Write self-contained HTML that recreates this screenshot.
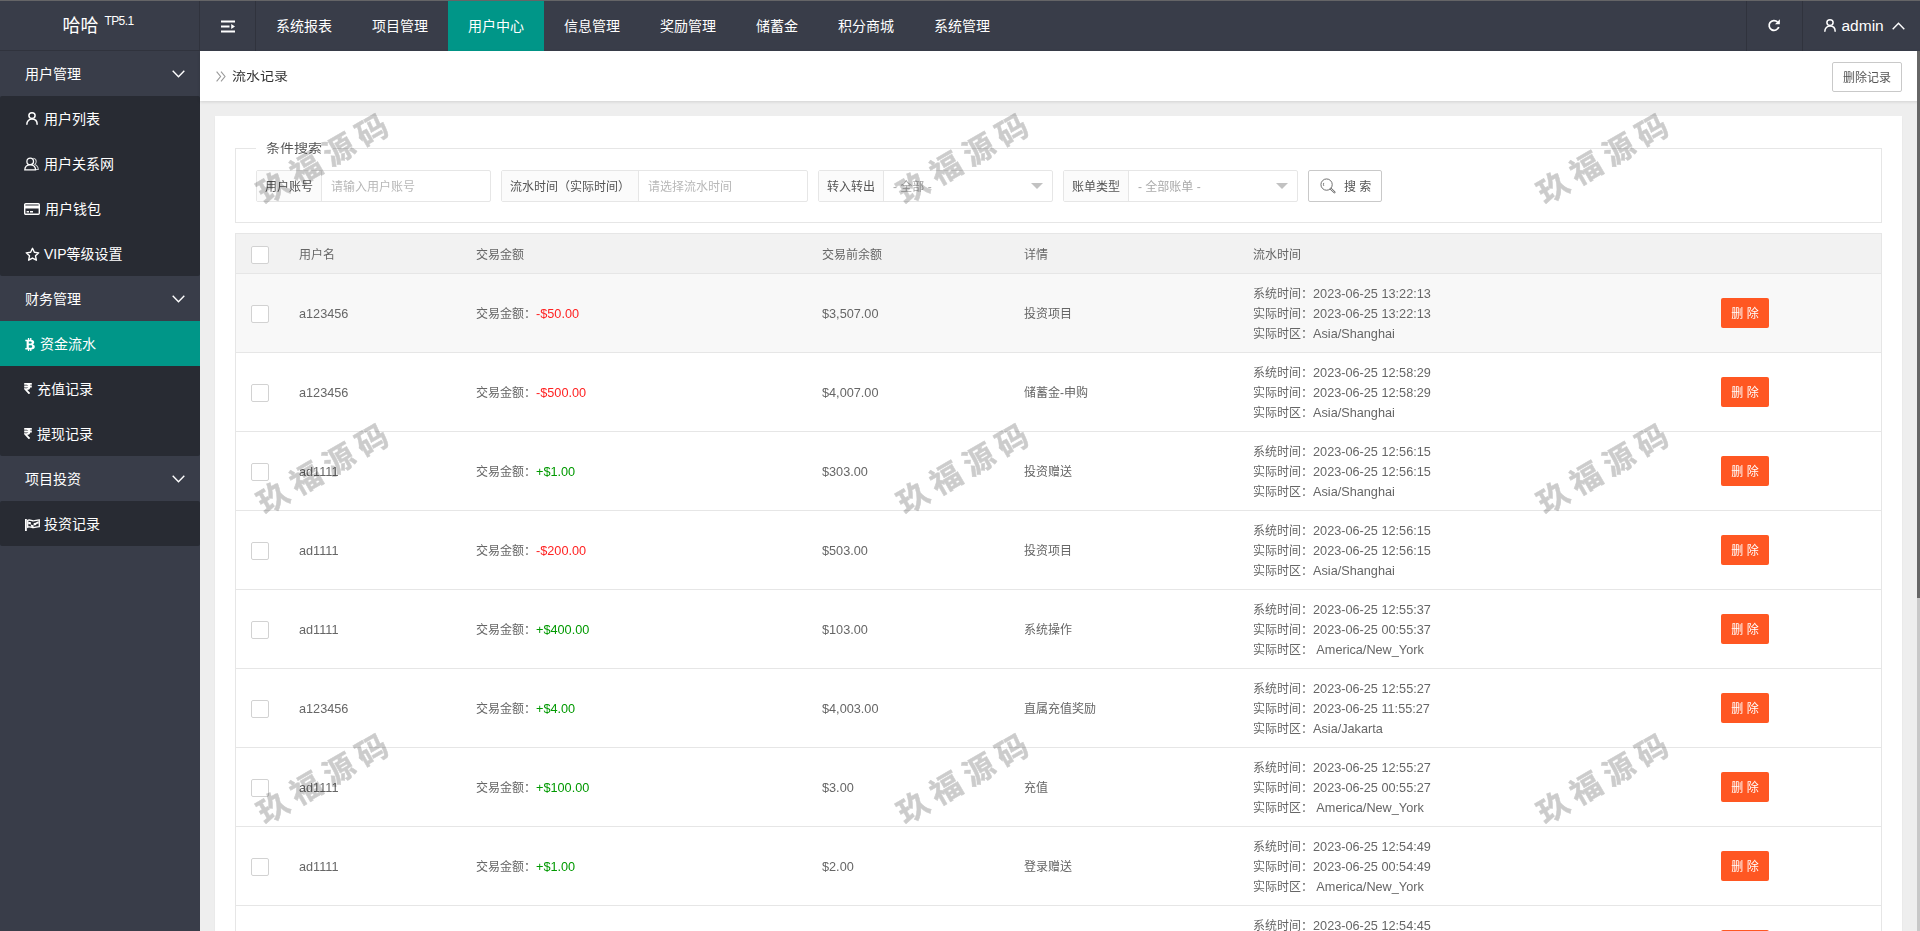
<!DOCTYPE html>
<html lang="zh-CN">
<head>
<meta charset="utf-8">
<title>流水记录</title>
<style>
*{margin:0;padding:0;box-sizing:border-box}
html,body{width:1920px;height:931px;overflow:hidden;background:#eee}
body{position:relative;font-family:"Liberation Sans","Noto Sans CJK SC",sans-serif;font-size:14px;color:#666;-webkit-font-smoothing:antialiased}
b{font-weight:normal}
a{text-decoration:none;color:inherit}
svg{display:block}
.abs{position:absolute}

/* header */
.header{position:absolute;left:0;top:0;width:1920px;height:51px;background:#393D49;border-top:1px solid #656567}
.logo{position:absolute;left:0;top:0;width:200px;height:50px;line-height:50px;text-align:center;color:#fff;font-size:18px;border-right:1px solid #30333d;border-bottom:1px solid #30333d;padding-right:3px}
.logo sup{font-size:12px;position:relative;top:0;vertical-align:super;line-height:0;margin-left:1px;letter-spacing:-0.6px}
.shrink{position:absolute;left:200px;top:0;width:56px;height:50px;border-right:1px solid #30333d}
.shrink svg{position:absolute;left:21px;top:19px}
.nav{position:absolute;left:256px;top:0;height:50px;display:flex}
.nav a{display:block;height:50px;line-height:50px;padding:0 20px;color:#fff;font-size:14px;white-space:nowrap}
.nav a.on{background:#009688}
.hr1{position:absolute;left:1746px;top:0;width:57px;height:50px;border-left:1px solid #30333d;border-right:1px solid #30333d}
.hr1 svg{position:absolute;left:20px;top:18px}
.hr2{position:absolute;left:1802px;top:0;width:118px;height:50px;color:#fff}
.hr2 .u{position:absolute;left:22px;top:18px}
.hr2 .t{position:absolute;left:39.5px;top:0;line-height:50px;font-size:15.5px}
.hr2 .ar{position:absolute;left:90px;top:21px}

/* side */
.side{position:absolute;left:0;top:51px;width:200px;height:880px;background:#393D49}
.side .g{position:relative;height:45px;line-height:47px;color:#fff;font-size:14px;padding-left:25px}
.side .g svg{position:absolute;left:172px;top:19px}
.side .sub{background:#282B33;border-radius:2px}
.side .it{position:relative;height:45px;line-height:47px;color:#fff;font-size:14px}
.side .it.on{background:#009688}
.side .it svg{position:absolute}
.side .it span{position:absolute;top:0}

/* crumb */
.crumb{will-change:transform;position:absolute;left:200px;top:51px;width:1720px;height:50px;background:#fff;box-shadow:0 1px 3px rgba(0,0,0,.12)}
.crumb .gg{position:absolute;left:16px;top:20px}
.crumb .tt{position:absolute;left:32px;top:0;line-height:51px;font-size:14px;color:#333;white-space:nowrap;transform:scaleY(.89)}
.crumb .btn{position:absolute;left:1632px;top:11px;width:70px;height:30px;border:1px solid #C9C9C9;border-radius:2px;background:#fff;color:#555;font-size:12px;line-height:30px;text-align:center}

/* card */
.card{will-change:transform;position:absolute;left:215px;top:116px;width:1687px;height:900px;background:#fff;box-shadow:0 1px 2px 0 rgba(0,0,0,.05)}
.fs{position:absolute;left:20px;top:32px;width:1647px;height:75px;border:1px solid #e6e6e6}
.fs .lg{position:absolute;left:20px;top:-12px;height:24px;line-height:25px;padding:0 11px 0 10px;background:#fff;font-size:14px;color:#555;transform:scaleY(.89)}
.grp{position:absolute;top:54px;height:32px;border:1px solid #e6e6e6;border-radius:2px;background:#fff}
.grp .lb{position:absolute;left:0;top:0;height:30px;line-height:33px;background:#fbfbfb;border-right:1px solid #e6e6e6;padding:0 8px;font-size:12px;color:#555;white-space:nowrap;text-align:center}
.grp .ph{position:absolute;top:0;line-height:33px;font-size:12px;color:#b8b8b8;white-space:nowrap}
.grp .tri{position:absolute;right:9px;top:12px;width:0;height:0;border:6px solid transparent;border-top-color:#c2c2c2}
.sbtn{position:absolute;left:1093px;top:54px;width:74px;height:32px;border:1px solid #c9c9c9;border-radius:2px;background:#fff;color:#555;font-size:12px}
.sbtn svg{position:absolute;left:11px;top:7px}
.sbtn span{position:absolute;left:35px;top:0;line-height:33px}

/* table */
.table{position:absolute;left:20px;top:117px;width:1647px;height:800px;border:1px solid #e6e6e6;border-bottom:0;font-size:12px;color:#666}
.th{position:absolute;left:0;top:0;width:1645px;height:39px;background:#f2f2f2;line-height:42px}
.tr{position:absolute;left:0;width:1645px;height:79px;border-top:1px solid #e6e6e6;line-height:20px}
.tr.hov{background:#f8f8f8}
.cb{position:absolute;left:15px;width:18px;height:18px;border:1px solid #d2d2d2;border-radius:2px;background:#fff}
.th .cb{top:12px}
.tr .cb{top:31px}
.c{position:absolute;white-space:nowrap}
.th .c{top:0}
.tr .c{top:30px}
.tr .c5{top:10px}
.c1{left:63px}.c2{left:240px}.c3{left:586px}.c4{left:788px}.c5{left:1017px}
.l{font-size:12.7px}
.neg{color:#f22}
.pos{color:#090}
.del{position:absolute;left:1485px;top:24px;width:48px;height:30px;background:#FF5722;border-radius:2px;color:#fff;font-size:12px;line-height:33px;text-align:center}

/* watermark */
.wm{position:absolute;left:0;top:0;width:1920px;height:931px;pointer-events:none;overflow:hidden}
.wm span{position:absolute;width:300px;height:60px;margin:-30px 0 0 -150px;line-height:60px;text-align:center;font-family:"Liberation Sans","Noto Sans CJK SC",sans-serif;font-weight:700;font-size:31px;letter-spacing:7px;text-indent:7px;color:#000;-webkit-text-stroke:0.5px #000;opacity:.2;transform:rotate(-30deg);white-space:nowrap}

/* scrollbar */
.sbar{position:absolute;left:1917px;top:51px;width:3px;height:880px;background:#c8c8c8}
.sbar i{position:absolute;left:0;top:0;width:3px;height:547px;background:#666}

</style>
</head>
<body>
<div class="header">
<div class="logo">哈哈 <sup>TP5.1</sup></div>
<div class="shrink"><svg width="14" height="13" viewBox="0 0 14 13"><path d="M0 0.5h14v2H0zM0 5.5h8.5v2H0zM0 10.5h14v2H0zM10.2 4l3.8 2.5-3.8 2.5z" fill="#fff"/></svg></div>
<div class="nav"><a>系统报表</a><a>项目管理</a><a class="on">用户中心</a><a>信息管理</a><a>奖励管理</a><a>储蓄金</a><a>积分商城</a><a>系统管理</a></div>
<div class="hr1"><svg width="14" height="13" viewBox="0 0 15 14"><path d="M11.3 3.2A5.3 5.3 0 1 0 12.6 8.6" fill="none" stroke="#fff" stroke-width="1.9"/><path d="M8.6 5.6h5.2V0.4z" fill="#fff"/></svg></div>
<div class="hr2"><svg class="u" width="12" height="13" viewBox="0 0 12 14" preserveAspectRatio="none"><circle cx="6" cy="3.9" r="3.1" fill="none" stroke="#fff" stroke-width="1.5"/><path d="M0.8 13.6C0.8 9.6 3.2 7.6 6 7.6s5.2 2 5.2 6" fill="none" stroke="#fff" stroke-width="1.5"/></svg><span class="t">admin</span><svg class="ar" width="13" height="8" viewBox="0 0 13 8"><path d="M0.7 7.2L6.5 1.2l5.8 6" fill="none" stroke="#fff" stroke-width="1.4"/></svg></div>
</div>

<div class="side">
<div class="g">用户管理<svg width="13" height="8" viewBox="0 0 13 8"><path d="M0.7 0.8L6.5 6.8l5.8-6" fill="none" stroke="#fff" stroke-width="1.4"/></svg></div>
<div class="sub">
<div class="it"><svg style="left:26px;top:16px" width="12" height="13" viewBox="0 0 12 14" preserveAspectRatio="none"><circle cx="6" cy="3.9" r="3.1" fill="none" stroke="#fff" stroke-width="1.5"/><path d="M0.8 13.6C0.8 9.6 3.2 7.6 6 7.6s5.2 2 5.2 6" fill="none" stroke="#fff" stroke-width="1.5"/></svg><span style="left:44px">用户列表</span></div>
<div class="it"><svg style="left:24px;top:16px" width="15" height="14" viewBox="0 0 15 14"><path d="M9.3 1.3c1.8 0.2 2.9 1.6 2.9 3.3 0 1.2-0.5 2.2-1.3 2.8 1.9 0.8 3.3 2.4 3.4 5.1H1" fill="none" stroke="#fff" stroke-width="1.1" opacity=".75"/><circle cx="6.2" cy="4.4" r="3.3" fill="#282B33" stroke="#fff" stroke-width="1.3"/><path d="M0.8 12.9C0.9 9.5 3.2 7.9 6.2 7.9s5.3 1.6 5.4 5z" fill="#282B33" stroke="#fff" stroke-width="1.3"/></svg><span style="left:44px">用户关系网</span></div>
<div class="it"><svg style="left:24px;top:17px" width="16" height="12" viewBox="0 0 16 12"><rect x="0.7" y="0.7" width="14.6" height="10.6" rx="1" fill="none" stroke="#fff" stroke-width="1.4"/><path d="M0.7 2.4h14.6v3H0.7zM2.6 8h2.4v1.4H2.6zM6 8h3v1.4H6z" fill="#fff"/></svg><span style="left:45px">用户钱包</span></div>
<div class="it"><svg style="left:24.6px;top:15.6px" width="15" height="15" viewBox="0 0 14 14"><path d="M7 1.2l1.75 3.75 4.05 0.5-3 2.8 0.8 4.05L7 10.3l-3.6 2 0.8-4.05-3-2.8 4.05-0.5z" fill="none" stroke="#fff" stroke-width="1.3" stroke-linejoin="round"/></svg><span style="left:44px">VIP等级设置</span></div>
</div>
<div class="g">财务管理<svg width="13" height="8" viewBox="0 0 13 8"><path d="M0.7 0.8L6.5 6.8l5.8-6" fill="none" stroke="#fff" stroke-width="1.4"/></svg></div>
<div class="sub">
<div class="it on"><svg style="left:25px;top:17px" width="10" height="13" viewBox="0 0 10 13"><path fill-rule="evenodd" d="M0.3 1.7h5.4c2.3 0 3.5 1 3.5 2.6 0 1-0.5 1.7-1.4 2.1 1.3 0.3 2 1.2 2 2.4 0 1.7-1.3 2.7-3.7 2.7H0.3V9.9h1.3V3.2H0.3zM3.8 3.4v2.2h1.5c0.9 0 1.4-0.4 1.4-1.1s-0.5-1.1-1.4-1.1zM3.8 7.2v2.5h1.8c1 0 1.6-0.4 1.6-1.25s-0.6-1.25-1.6-1.25z" fill="#fff"/><path d="M2.9 0h1.3v2H2.9zM5.1 0h1.3v2H5.1zM2.9 11h1.3v2H2.9zM5.1 11h1.3v2H5.1z" fill="#fff"/></svg><span style="left:40px">资金流水</span></div>
<div class="it"><svg style="left:24.3px;top:17.3px" width="8" height="11" viewBox="0 0 8 11"><path d="M0.2 0.9h7.6M0.2 3.5h7.6M0.4 0.9h2.2c1.9 0 2.9 0.9 2.9 2.6s-1.1 2.6-2.9 2.6H1.3l4.2 4.6" fill="none" stroke="#fff" stroke-width="1.8"/></svg><span style="left:37px">充值记录</span></div>
<div class="it"><svg style="left:24.3px;top:17.3px" width="8" height="11" viewBox="0 0 8 11"><path d="M0.2 0.9h7.6M0.2 3.5h7.6M0.4 0.9h2.2c1.9 0 2.9 0.9 2.9 2.6s-1.1 2.6-2.9 2.6H1.3l4.2 4.6" fill="none" stroke="#fff" stroke-width="1.8"/></svg><span style="left:37px">提现记录</span></div>
</div>
<div class="g">项目投资<svg width="13" height="8" viewBox="0 0 13 8"><path d="M0.7 0.8L6.5 6.8l5.8-6" fill="none" stroke="#fff" stroke-width="1.4"/></svg></div>
<div class="sub">
<div class="it"><svg style="left:25px;top:18px" width="15" height="12" viewBox="0 0 15 12"><path d="M0.9 0v12" stroke="#fff" stroke-width="1.8"/><path d="M2.7 1.3c2.3-1.1 3.9 0.8 6 0.6 2.1-0.2 3.3-0.9 5.6-1v6.8c-2.3 0-3.500 0.8-5.600 1-2.100 0.200-3.700-1.700-6-0.600z" fill="none" stroke="#fff" stroke-width="1.3"/><path d="M3.200 2.800l2.700 0.500v2.300L3.200 5.100zM8.600 4.200l2.700-0.600v2.300L8.600 6.500zM5.900 5.600l2.700 0.900v1.900L5.900 7.500zM11.300 3.000l2.400-0.700v2.100l-2.400 0.700z" fill="#fff"/></svg><span style="left:44px">投资记录</span></div>
</div>
</div>

<div class="crumb">
<svg class="gg" width="10" height="11" viewBox="0 0 10 11"><path d="M0.6 0.6l4 4.9-4 4.9M5 0.6l4 4.9-4 4.9" fill="none" stroke="#999" stroke-width="1.1"/></svg>
<span class="tt">流水记录</span>
<a class="btn">删除记录</a>
</div>

<div class="card">
<div class="fs"><span class="lg">条件搜索</span></div>
<div class="grp" style="left:41px;width:235px"><span class="lb" style="width:65px">用户账号</span><span class="ph" style="left:74px">请输入用户账号</span></div>
<div class="grp" style="left:286px;width:307px"><span class="lb" style="width:137px">流水时间（实际时间）</span><span class="ph" style="left:146px">请选择流水时间</span></div>
<div class="grp" style="left:603px;width:235px"><span class="lb" style="width:65px">转入转出</span><span class="ph" style="left:74px;color:#aaa">- 全部 -</span><i class="tri"></i></div>
<div class="grp" style="left:848px;width:235px"><span class="lb" style="width:65px">账单类型</span><span class="ph" style="left:74px;color:#aaa">- 全部账单 -</span><i class="tri"></i></div>
<a class="sbtn"><svg width="16" height="16" viewBox="0 0 17 17"><circle cx="7" cy="7" r="6" fill="none" stroke="#666" stroke-width="1"/><path d="M4 5.2C3.5 6 3.5 7.4 4 8.4" fill="none" stroke="#666" stroke-width="0.9"/><path d="M11.4 11.4l4 3.8" stroke="#666" stroke-width="2.2" stroke-linecap="round"/><path d="M11.6 11.6l3.6 3.4" stroke="#fff" stroke-width="0.8" stroke-linecap="round"/></svg><span>搜 索</span></a>

<div class="table">
<div class="th"><i class="cb"></i><span class="c c1">用户名</span><span class="c c2">交易金额</span><span class="c c3">交易前余额</span><span class="c c4">详情</span><span class="c c5">流水时间</span></div>
<div class="tr hov" style="top:39px">
<i class="cb"></i>
<span class="c c1 l">a123456</span>
<span class="c c2">交易金额：<b class="l neg">-$50.00</b></span>
<span class="c c3 l">$3,507.00</span>
<span class="c c4">投资项目</span>
<span class="c c5">系统时间：<b class="l">2023-06-25 13:22:13</b><br>实际时间：<b class="l">2023-06-25 13:22:13</b><br>实际时区：<b class="l">Asia/Shanghai</b></span>
<a class="del">删 除</a>
</div>
<div class="tr" style="top:118px">
<i class="cb"></i>
<span class="c c1 l">a123456</span>
<span class="c c2">交易金额：<b class="l neg">-$500.00</b></span>
<span class="c c3 l">$4,007.00</span>
<span class="c c4">储蓄金-申购</span>
<span class="c c5">系统时间：<b class="l">2023-06-25 12:58:29</b><br>实际时间：<b class="l">2023-06-25 12:58:29</b><br>实际时区：<b class="l">Asia/Shanghai</b></span>
<a class="del">删 除</a>
</div>
<div class="tr" style="top:197px">
<i class="cb"></i>
<span class="c c1 l">ad1111</span>
<span class="c c2">交易金额：<b class="l pos">+$1.00</b></span>
<span class="c c3 l">$303.00</span>
<span class="c c4">投资赠送</span>
<span class="c c5">系统时间：<b class="l">2023-06-25 12:56:15</b><br>实际时间：<b class="l">2023-06-25 12:56:15</b><br>实际时区：<b class="l">Asia/Shanghai</b></span>
<a class="del">删 除</a>
</div>
<div class="tr" style="top:276px">
<i class="cb"></i>
<span class="c c1 l">ad1111</span>
<span class="c c2">交易金额：<b class="l neg">-$200.00</b></span>
<span class="c c3 l">$503.00</span>
<span class="c c4">投资项目</span>
<span class="c c5">系统时间：<b class="l">2023-06-25 12:56:15</b><br>实际时间：<b class="l">2023-06-25 12:56:15</b><br>实际时区：<b class="l">Asia/Shanghai</b></span>
<a class="del">删 除</a>
</div>
<div class="tr" style="top:355px">
<i class="cb"></i>
<span class="c c1 l">ad1111</span>
<span class="c c2">交易金额：<b class="l pos">+$400.00</b></span>
<span class="c c3 l">$103.00</span>
<span class="c c4">系统操作</span>
<span class="c c5">系统时间：<b class="l">2023-06-25 12:55:37</b><br>实际时间：<b class="l">2023-06-25 00:55:37</b><br>实际时区：&nbsp;<b class="l">America/New_York</b></span>
<a class="del">删 除</a>
</div>
<div class="tr" style="top:434px">
<i class="cb"></i>
<span class="c c1 l">a123456</span>
<span class="c c2">交易金额：<b class="l pos">+$4.00</b></span>
<span class="c c3 l">$4,003.00</span>
<span class="c c4">直属充值奖励</span>
<span class="c c5">系统时间：<b class="l">2023-06-25 12:55:27</b><br>实际时间：<b class="l">2023-06-25 11:55:27</b><br>实际时区：<b class="l">Asia/Jakarta</b></span>
<a class="del">删 除</a>
</div>
<div class="tr" style="top:513px">
<i class="cb"></i>
<span class="c c1 l">ad1111</span>
<span class="c c2">交易金额：<b class="l pos">+$100.00</b></span>
<span class="c c3 l">$3.00</span>
<span class="c c4">充值</span>
<span class="c c5">系统时间：<b class="l">2023-06-25 12:55:27</b><br>实际时间：<b class="l">2023-06-25 00:55:27</b><br>实际时区：&nbsp;<b class="l">America/New_York</b></span>
<a class="del">删 除</a>
</div>
<div class="tr" style="top:592px">
<i class="cb"></i>
<span class="c c1 l">ad1111</span>
<span class="c c2">交易金额：<b class="l pos">+$1.00</b></span>
<span class="c c3 l">$2.00</span>
<span class="c c4">登录赠送</span>
<span class="c c5">系统时间：<b class="l">2023-06-25 12:54:49</b><br>实际时间：<b class="l">2023-06-25 00:54:49</b><br>实际时区：&nbsp;<b class="l">America/New_York</b></span>
<a class="del">删 除</a>
</div>
<div class="tr" style="top:671px">
<i class="cb"></i>
<span class="c c1 l">ad1111</span>
<span class="c c2">交易金额：<b class="l pos">+$1.00</b></span>
<span class="c c3 l">$1.00</span>
<span class="c c4">注册赠送</span>
<span class="c c5">系统时间：<b class="l">2023-06-25 12:54:45</b><br>实际时间：<b class="l">2023-06-25 00:54:45</b><br>实际时区：&nbsp;<b class="l">America/New_York</b></span>
<a class="del">删 除</a>
</div>
</div>
</div>
<div class="wm"><span style="left:323px;top:160px">玖福源码</span><span style="left:963px;top:160px">玖福源码</span><span style="left:1603px;top:160px">玖福源码</span><span style="left:323px;top:470px">玖福源码</span><span style="left:963px;top:470px">玖福源码</span><span style="left:1603px;top:470px">玖福源码</span><span style="left:323px;top:780px">玖福源码</span><span style="left:963px;top:780px">玖福源码</span><span style="left:1603px;top:780px">玖福源码</span></div>
<div class="sbar"><i></i></div>

</body>
</html>
